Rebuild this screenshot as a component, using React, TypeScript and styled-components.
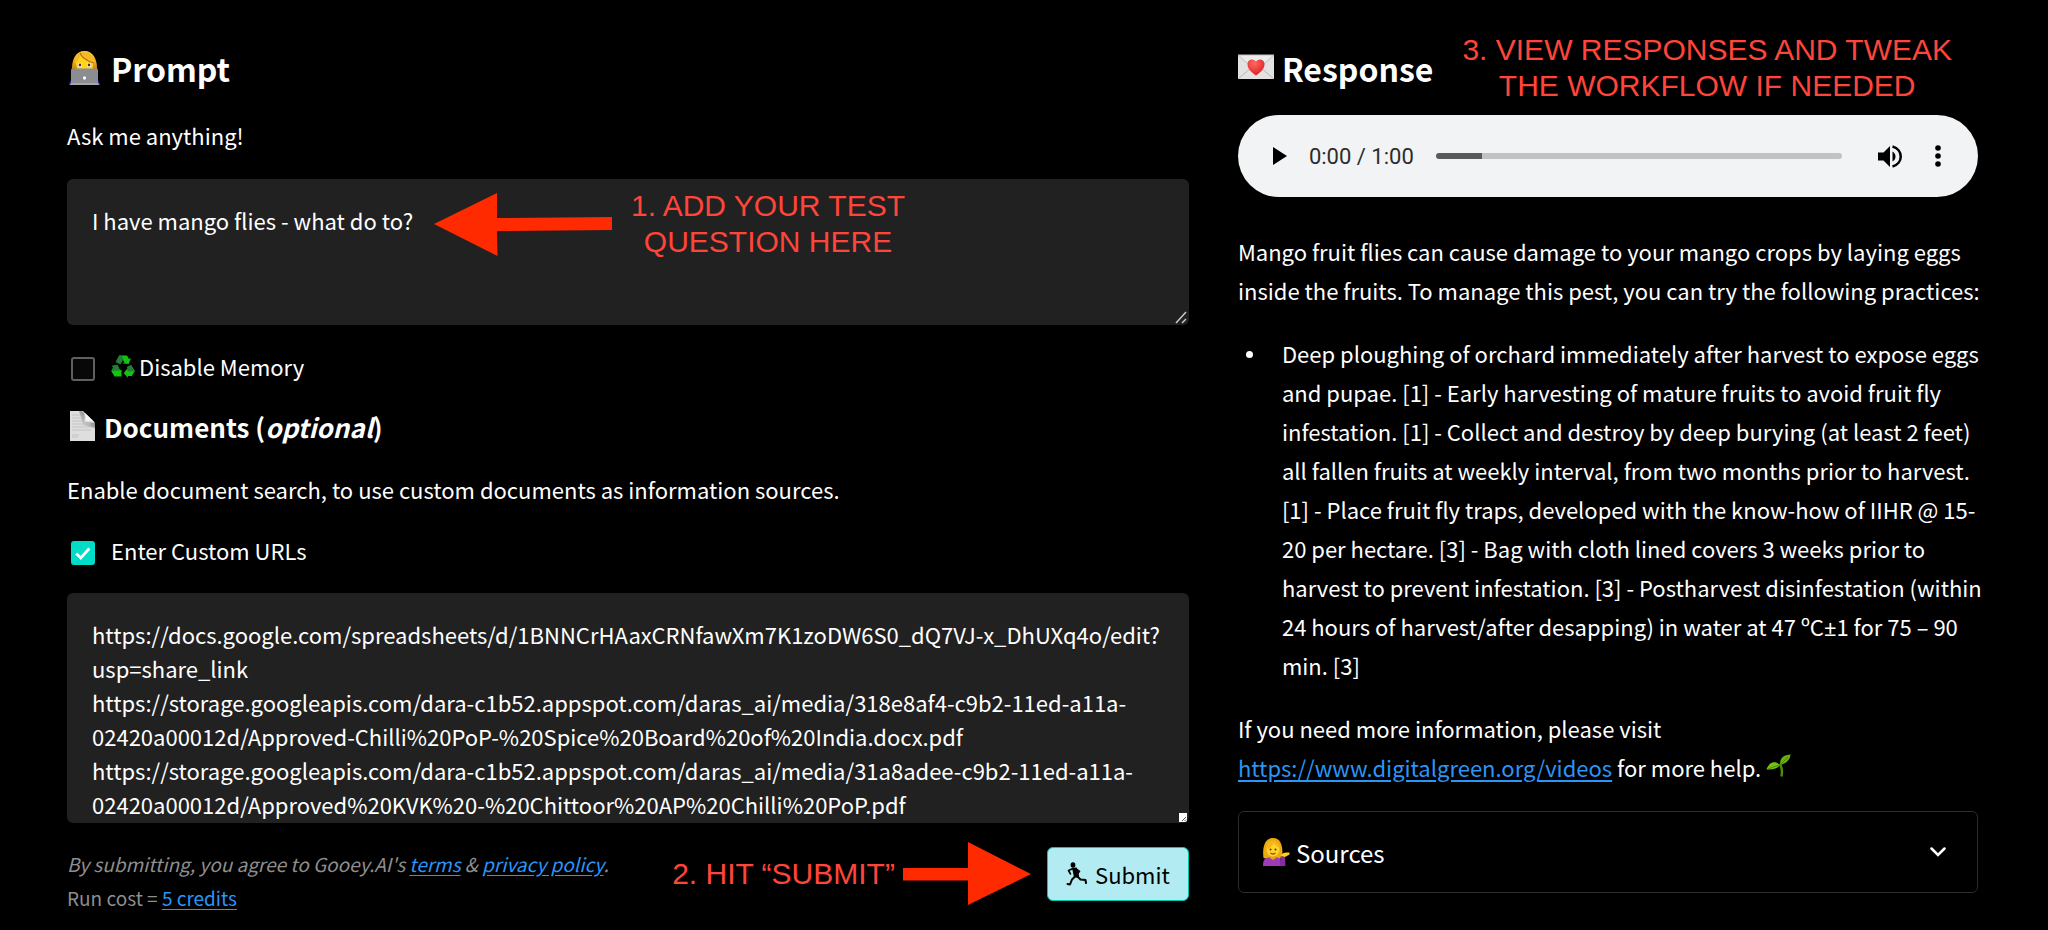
import React, { useId, useState } from 'react';
import styled, { createGlobalStyle } from 'styled-components';

const sans = `"Noto Sans CJK SC", "Noto Sans", sans-serif`;

const GlobalStyle = createGlobalStyle`
  *, *::before, *::after { box-sizing: border-box; }
  body { margin: 0; background: #000; color: #fff; font-family: ${sans}; font-size: 22px; }
  h2, h3, p, ul { margin: 0; padding: 0; }
  button, input, textarea { font: inherit; color: inherit; }
`;

const Page = styled.main`
  display: grid;
  grid-template-columns: minmax(0, 1.516fr) minmax(0, 1fr);
  column-gap: 49px;
  min-height: 100vh;
  padding: 0 70px 24px 67px;
`;

const Column = styled.section`
  display: flex;
  flex-direction: column;
  gap: 24px;
  padding-top: 45px;
`;

const Title = styled.h2`
  display: flex;
  align-items: center;
  gap: 8px;
  font-size: 32px;
  line-height: 46px;
  font-weight: 700;
  white-space: nowrap;
`;

const Subtitle = styled.h3`
  display: flex;
  align-items: center;
  gap: 8px;
  font-size: 26px;
  line-height: 36px;
  font-weight: 700;
`;

const Text = styled.p<{ $leading?: number }>`
  line-height: ${(p) => p.$leading ?? 40}px;
`;

const Field = styled.div`
  position: relative;
  display: flex;
`;

const TextArea = styled.textarea<{ $height: number }>`
  display: block;
  width: 100%;
  height: ${(p) => p.$height}px;
  padding: 24px 24px 24px 25px;
  border: 0;
  border-radius: 6px;
  outline: 0;
  background: #212121;
  line-height: 34px;
  resize: none;
  overflow: hidden;
`;

const Grip = styled.svg`
  position: absolute;
  right: 2px;
  bottom: 1px;
`;

const CheckRow = styled.label`
  display: flex;
  align-items: flex-start;
  gap: 16px;
  min-height: 36px;
  padding-left: 4px;
  line-height: 34px;
`;

const CheckLabel = styled.span`
  display: flex;
  align-items: center;
  gap: 4px;
`;

const CheckBox = styled.input`
  appearance: none;
  width: 24px;
  height: 24px;
  margin: 8px 0 0;
  border: 2px solid #606060;
  border-radius: 3px;
  background: #080808;
  &:checked {
    border-color: #00dcc8;
    background: #00dcc8
      url("data:image/svg+xml,%3Csvg xmlns='http://www.w3.org/2000/svg' viewBox='0 0 20 20'%3E%3Cpath d='M2.5 10.5l5 5 9.500-10.500' fill='none' stroke='white' stroke-width='3'/%3E%3C/svg%3E")
      center / 18px no-repeat;
  }
`;

const Footer = styled.footer`
  display: flex;
  align-items: flex-start;
  justify-content: space-between;
`;

const Legal = styled.div`
  flex: 1;
  color: #8e8e8e;
  font-size: 19px;
  line-height: 34px;
`;

const Link = styled.a`
  color: #2b95f8;
  text-decoration: underline;
  text-underline-offset: 3px;
`;

const Callout = styled.div`
  display: flex;
  align-items: center;
  color: #ff453a;
  font-family: "Liberation Sans", Arial, sans-serif;
  font-size: 30px;
  font-weight: 400;
  line-height: 36px;
  text-align: center;
  white-space: nowrap;
`;

const QuestionCallout = styled(Callout)`
  position: absolute;
  left: 367px;
  top: 9px;
  gap: 19px;
  pointer-events: none;
`;

const SubmitCallout = styled(Callout)`
  gap: 8px;
  padding-right: 16px;
  margin-top: -5px;
`;

const TitleRow = styled.div`
  display: flex;
  justify-content: space-between;
  height: 46px;
  padding-right: 26px;
`;

const ResponseCallout = styled(Callout)`
  align-self: flex-end;
  margin-bottom: -13px;
`;

const Submit = styled.button`
  display: flex;
  align-items: center;
  justify-content: center;
  gap: 8px;
  width: 142px;
  height: 54px;
  padding: 0;
  border: 1px solid #00c8b0;
  border-radius: 6px;
  background: #b2ebf2;
  color: #000;
  font-size: 22px;
`;

const Player = styled.div`
  display: flex;
  align-items: center;
  height: 82px;
  margin-bottom: 11px;
  padding: 0 24px 0 26px;
  border-radius: 41px;
  background: #f1f3f4;
  color: #000;
`;

const IconButton = styled.button`
  display: flex;
  align-items: center;
  justify-content: center;
  flex: none;
  width: 32px;
  height: 40px;
  padding: 0;
  border: 0;
  background: none;
`;

const Time = styled.span`
  flex: none;
  margin: 0 22px 0 13px;
  color: #2c2c2c;
  font-family: Roboto, sans-serif;
  font-size: 22px;
`;

const Seek = styled.input`
  appearance: none;
  flex: 1;
  min-width: 0;
  height: 6px;
  margin: 0 32px 0 0;
  border-radius: 3px;
  background: linear-gradient(to right, #5a5a5a 0 46px, #c1c2c4 46px);
  &::-webkit-slider-thumb { appearance: none; width: 0; height: 0; }
`;

const PlayerActions = styled.div`
  display: flex;
  gap: 16px;
`;

const Answer = styled.div`
  display: flex;
  flex-direction: column;
  gap: 24px;
  margin-right: -10px;
`;

const Practices = styled.ul`
  list-style: none;
  line-height: 39px;
`;

const Practice = styled.li`
  display: flex;
  &::before {
    content: '';
    flex: none;
    width: 7px;
    height: 7px;
    margin: 17px 29px 0 8px;
    border-radius: 50%;
    background: #fff;
  }
`;

const Symbol = styled.span`
  font-family: "Noto Sans", sans-serif;
  line-height: 1;
`;

const InlineIcon = styled.span`
  display: inline-block;
  margin-left: 5px;
  line-height: 0;
`;

const Sources = styled.button`
  display: flex;
  align-items: center;
  gap: 6px;
  height: 82px;
  padding: 0 31px 0 23px;
  border: 1px solid #2c2c2c;
  border-radius: 6px;
  background: #000;
  font-size: 24px;
  text-align: left;
`;

const SourcesLabel = styled.span`
  flex: 1;
`;

const TechnologistIcon = () => {
  const id = useId();
  return (
    <svg width="36" height="39" viewBox="-2 0 36 39" aria-hidden="true">
      <defs>
        <linearGradient id={id} x1="0" y1="0" x2="0" y2="1">
          <stop offset="0" stopColor="#ffd84a" />
          <stop offset=".5" stopColor="#f0a818" />
          <stop offset="1" stopColor="#b96f05" />
        </linearGradient>
      </defs>
      <path d="M0 36c.500-4 3-7 6-8h19c3 1 5.500 4 6 8z" fill="#2b27d8" />
      <path d="M3 24C2 10 7 2 15.500 2S29 10 28 24z" fill={`url(#${id})`} />
      <path d="M7 13c0-5 4-7 8.500-7S24 9 24 15s-2 9-8.500 9S7 19 7 13z" fill="#ffd21c" />
      <path d="M6 15C9 12 11 8 12 5c3 4 8 6 14 9C25 6 21 3 15.500 3S6 6 6 15z" fill="#f5b829" />
      <path d="M11 4c2 5 7 8 14 10" fill="none" stroke="#b3700c" strokeWidth="1.200" />
      <circle cx="11" cy="16" r="2.200" fill="#fff" />
      <circle cx="20" cy="16" r="2.200" fill="#fff" />
      <circle cx="11" cy="16" r="1.400" fill="#533011" />
      <circle cx="20" cy="16" r="1.400" fill="#533011" />
      <path d="M2 21q0-1.500 1.500-1.500h24q1.500 0 1.500 1.500v13l1 2H1l1-2z" fill="#8b8d92" />
      <path d="M2 34h27l1 2H1z" fill="#a5a7aa" />
      <ellipse cx="15.500" cy="29" rx="1.500" ry="1.800" fill="#fff" />
    </svg>
  );
};

const LoveLetterIcon = () => {
  const id = useId();
  return (
    <svg width="36" height="29" viewBox="0 0 36 29" aria-hidden="true">
      <defs>
        <radialGradient id={id} cx=".4" cy=".25" r=".8">
          <stop offset="0" stopColor="#ff6a62" />
          <stop offset="1" stopColor="#d91b20" />
        </radialGradient>
      </defs>
      <path d="M0 1h36v24H0z" fill="#e2e2e2" />
      <path d="M0 25l14-12M36 25L22 13" stroke="#b8b8b8" />
      <path d="M0 1l16 14q2 1.500 4 0L36 1z" fill="#ececec" stroke="#c2c2c2" />
      <path d="M18 21.500C12 17.500 9.500 14 9.500 10c0-5 6-6 8.500-2.500 2.500-3.500 8.500-2.500 8.500 2.500 0 4-2.500 7.500-8.500 11.500z" fill={`url(#${id})`} />
    </svg>
  );
};

const PageIcon = () => {
  const id = useId();
  return (
    <svg width="29" height="34" viewBox="-2 0 29 34" aria-hidden="true">
      <defs>
        <linearGradient id={id} x1="1" y1="0" x2="0" y2="1">
          <stop offset="0" stopColor="#555" />
          <stop offset="1" stopColor="#eee" />
        </linearGradient>
      </defs>
      <path d="M1 1h13l12 12v18H1z" fill="#dedede" />
      <path d="M12 1c4 1 4 5 3.500 11L26 13v5L14 15 10 1z" fill={`url(#${id})`} />
      <path d="M16 3c1 3 1 6 .500 8 3-.500 6 0 9 1z" fill="#f7f7f7" />
      <path d="M3 5h8M3 8h9M3 11h10M3 14h19M3 17h19M3 20h19M3 25h7M3 27h6" stroke="#c4c4c4" />
    </svg>
  );
};

const RecycleIcon = () => (
  <svg width="24" height="23" viewBox="0 0 24 23" aria-hidden="true">
    <g fill="#12c312">
      <path d="M8 .500h8l2 3.500 2-1-2.300 6-6.200-.500 2-1-2.500-4z" />
      <path d="M20 10l3.800 6-3 5h-4v2l-4-5 4-5v2.500h2L16.500 12z" />
      <path d="M10.500 15v6.500H3.500L.300 16 2.500 12 .500 11l6-1 2.500 5z" />
    </g>
    <g fill="#207f35">
      <path d="M8 .500h2l2.500 3.500-3 5.500L4.500 7z" />
      <path d="M20 10l3.800 6-6 .500-2-4.500z" />
      <path d="M.300 16l2.200-4L.500 11l6-1 2.500 5.500z" />
    </g>
  </svg>
);

const RunnerIcon = () => (
  <svg width="21" height="24" viewBox="0 0 21 24" aria-hidden="true">
    <ellipse cx="7" cy="3" rx="2.400" ry="2.800" />
    <path d="M6 6l4.500-.500c1.500 2.500 2 5 2.500 8l-1 2.500-4-1z" />
    <g fill="none" stroke="#000" strokeLinecap="round" strokeLinejoin="round">
      <path d="M7 6.500L2.500 8.500l2 3.500M9.500 6.500l4 3-2 2" strokeWidth="1.600" />
      <path d="M9.500 14L6 17.500 4 22.500l-2.500-.500" strokeWidth="2" />
      <path d="M11.500 14.500l3 3 5 .500.500 3" strokeWidth="2" />
    </g>
  </svg>
);

const SeedlingIcon = () => (
  <svg width="25" height="23" viewBox="0 0 25 23" aria-hidden="true">
    <path d="M14 10c2 4 2.500 8 1.500 12.500" fill="none" stroke="#4d8f08" strokeWidth="2.400" />
    <path d="M14 11C14 3 18 1 24.500.500 24 6 20 9.500 14 11z" fill="#62b40a" />
    <path d="M14 11C9 6 3 8 .500 15.500 6 16 11 15 14 11z" fill="#72c310" />
    <path d="M14 11L22 3M2 15l11-4" fill="none" stroke="#458809" strokeWidth="1" />
  </svg>
);

const TippingHandIcon = () => (
  <svg width="28" height="28" viewBox="0 0 28 28" aria-hidden="true">
    <path d="M1.500 20C0 9 3 0 11 0s10.500 9 9 20c-6 2-12 2-18.500 0z" fill="#edaa0e" />
    <path d="M1 28c0-5 1-7.500 5-8.500h9c4 .500 4 4 4 8.500z" fill="#9c3bb6" />
    <path d="M18 28l.500-9.500h4.500L23.500 28z" fill="#862ba0" />
    <path d="M19 18c1-3 3-3 5-3.500h3.500v2L23 19z" fill="#ffcf1f" />
    <path d="M8 16h6v4l-3 2-3-2z" fill="#e7a411" />
    <ellipse cx="11" cy="11.500" rx="6.500" ry="7" fill="#ffd42a" />
    <path d="M4 11.500c4-1 7-4 8-7 1 3 4 5 6 6-.500-5-3-8-7-8s-7 3-7 9z" fill="#f5b51a" />
    <circle cx="8.500" cy="11.500" r="1" fill="#553510" />
    <circle cx="13.500" cy="11.500" r="1" fill="#553510" />
    <path d="M8.500 15q2.500 2 5 0" fill="none" stroke="#a43c20" strokeWidth="1.300" />
  </svg>
);

const LeftArrow = () => (
  <svg width="178" height="63" viewBox="0 0 178 63" aria-hidden="true">
    <path d="M0 31L63 0v25l115-1v13l-115 1 .500 25z" fill="#ff2a00" />
  </svg>
);

const RightArrow = () => (
  <svg width="128" height="63" viewBox="0 0 128 63" aria-hidden="true">
    <path d="M0 26h65V0l63 32-63 31V38.500H0z" fill="#ff2a00" />
  </svg>
);

const urls = `https://docs.google.com/spreadsheets/d/1BNNCrHAaxCRNfawXm7K1zoDW6S0_dQ7VJ-x_DhUXq4o/edit?usp=share_link
https://storage.googleapis.com/dara-c1b52.appspot.com/daras_ai/media/318e8af4-c9b2-11ed-a11a-02420a00012d/Approved-Chilli%20PoP-%20Spice%20Board%20of%20India.docx.pdf
https://storage.googleapis.com/dara-c1b52.appspot.com/daras_ai/media/31a8adee-c9b2-11ed-a11a-02420a00012d/Approved%20KVK%20-%20Chittoor%20AP%20Chilli%20PoP.pdf`;

export default function App() {
  const [question, setQuestion] = useState('I have mango flies - what do to?');
  const [documents, setDocuments] = useState(urls);

  return (
    <>
      <GlobalStyle />
      <Page>
        <Column>
          <Title><TechnologistIcon />Prompt</Title>
          <Text as="label" htmlFor="question">Ask me anything!</Text>
          <Field>
            <TextArea id="question" $height={146} value={question} onChange={(e) => setQuestion(e.target.value)} />
            <QuestionCallout>
              <LeftArrow />
              <span>1. ADD YOUR TEST<br />QUESTION HERE</span>
            </QuestionCallout>
            <Grip width="12" height="13" viewBox="0 0 12 13" aria-hidden="true">
              <path d="M1 12L11 1M7 12l4-4" stroke="#c8c8c8" strokeWidth="1.500" />
            </Grip>
          </Field>
          <CheckRow>
            <CheckBox type="checkbox" />
            <CheckLabel><RecycleIcon />Disable Memory</CheckLabel>
          </CheckRow>
          <Subtitle><PageIcon /><span>Documents (<em>optional</em>)</span></Subtitle>
          <Text>Enable document search, to use custom documents as information sources.</Text>
          <CheckRow>
            <CheckBox type="checkbox" defaultChecked />
            <CheckLabel>Enter Custom URLs</CheckLabel>
          </CheckRow>
          <Field>
            <TextArea aria-label="Custom URLs" $height={230} value={documents} onChange={(e) => setDocuments(e.target.value)} />
            <Grip width="8" height="9" viewBox="0 0 8 9" aria-hidden="true">
              <path d="M0 0h8v7q0 2-2 2H0z" fill="#fff" />
              <path d="M3 8l4-4M5.500 8L7 6.500" stroke="#555" />
            </Grip>
          </Field>
          <Footer>
            <Legal>
              <p><em>By submitting, you agree to Gooey.AI's <Link href="#terms">terms</Link> & <Link href="#privacy">privacy policy</Link>.</em></p>
              <p>Run cost = <Link href="#credits">5 credits</Link></p>
            </Legal>
            <SubmitCallout>
              <span>2. HIT “SUBMIT”</span>
              <RightArrow />
            </SubmitCallout>
            <Submit type="button"><RunnerIcon />Submit</Submit>
          </Footer>
        </Column>

        <Column>
          <TitleRow>
            <Title><LoveLetterIcon />Response</Title>
            <ResponseCallout>3. VIEW RESPONSES AND TWEAK<br />THE WORKFLOW IF NEEDED</ResponseCallout>
          </TitleRow>
          <Player>
            <IconButton type="button" aria-label="Play">
              <svg width="14" height="18" viewBox="0 0 14 18"><path d="M0 0l14 9-14 9z" /></svg>
            </IconButton>
            <Time>0:00 / 1:00</Time>
            <Seek type="range" min={0} max={60} defaultValue={0} aria-label="Seek" />
            <PlayerActions>
              <IconButton type="button" aria-label="Mute">
                <svg width="24" height="23" viewBox="0 0 24 23">
                  <path d="M0 7.500h5.500L12 1v21l-6.500-6.500H0z" />
                  <path d="M14.500 6.500c4 2 4 8 0 10z" />
                  <path d="M14.500 1.500c11 3 11 17 0 20" fill="none" stroke="#000" strokeWidth="2.500" />
                </svg>
              </IconButton>
              <IconButton type="button" aria-label="More options">
                <svg width="6" height="22" viewBox="0 0 6 22">
                  <circle cx="3" cy="3" r="2.800" /><circle cx="3" cy="11" r="2.800" /><circle cx="3" cy="19" r="2.800" />
                </svg>
              </IconButton>
            </PlayerActions>
          </Player>
          <Answer>
            <Text $leading={39}>
              Mango fruit flies can cause damage to your mango crops by laying eggs inside the fruits. To manage this pest, you can try the following practices:
            </Text>
            <Practices>
              <Practice>
                <span>
                  Deep ploughing of orchard immediately after harvest to expose eggs and pupae. [1] - Early harvesting of mature fruits to avoid fruit fly infestation. [1] - Collect and destroy by deep burying (at least 2 feet) all fallen fruits at weekly interval, from two months prior to harvest. [1] - Place fruit fly traps, developed with the know-how of IIHR @ 15-20 per hectare. [3] - Bag with cloth lined covers 3 weeks prior to harvest to prevent infestation. [3] - Postharvest disinfestation (within 24 hours of harvest/after desapping) in water at 47 ºC<Symbol>±</Symbol>1 for 75 – 90 min. [3]
                </span>
              </Practice>
            </Practices>
            <Text $leading={39}>
              If you need more information, please visit <br /><Link href="#videos">https://www.digitalgreen.org/videos</Link> for more help.
              <InlineIcon><SeedlingIcon /></InlineIcon>
            </Text>
          </Answer>
          <Sources type="button" aria-expanded="false">
            <TippingHandIcon />
            <SourcesLabel>Sources</SourcesLabel>
            <svg width="16" height="10" viewBox="0 0 16 10" aria-hidden="true">
              <path d="M1.500 1.500L8 8l6.500-6.500" fill="none" stroke="#fff" strokeWidth="2.500" strokeLinecap="round" />
            </svg>
          </Sources>
        </Column>
      </Page>
    </>
  );
}
